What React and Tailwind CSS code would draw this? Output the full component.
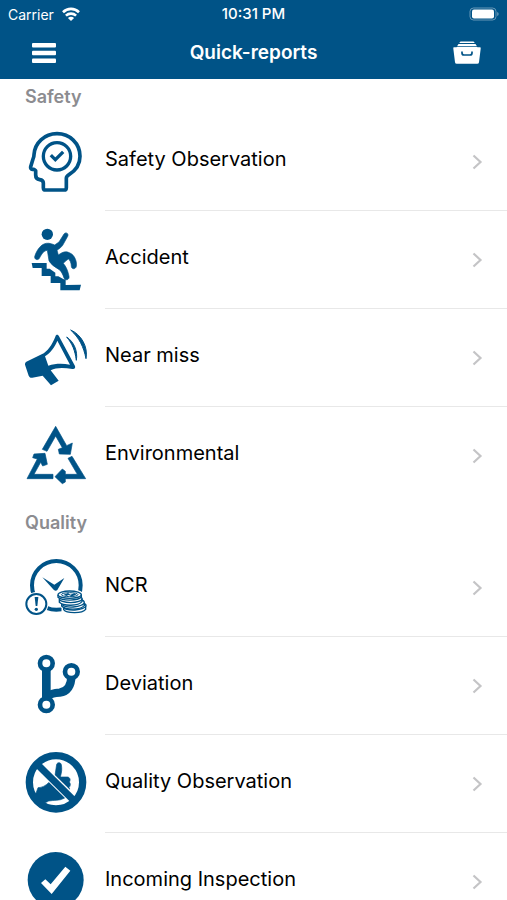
import { Fragment } from 'react';

const HeadCheckIcon = () => (
    <svg viewBox="27 30 192 192" className="w-16 h-16" fill="none" stroke="currentColor" strokeWidth="11" strokeLinecap="round" strokeLinejoin="round" aria-hidden="true">
        <path d="M92 210H147C151 210 154 207 154 203V175C154 170 157 167 162 164C182 152 195 132 195 109C195 70 164 41 126 41C88 41 59 69 57 104C57 109 56 113 54 117L47 140C46 145 48 148 52 148H57L62 152V165C62 173 67 178 74 179C81 180 85 183 85 189V203C85 207 88 210 92 210Z" />
        <circle cx="126" cy="109" r="41" strokeWidth="10" />
        <path d="M111 109L121 119L141 99" strokeWidth="10" strokeLinecap="square" strokeLinejoin="miter" />
    </svg>
);

const FallIcon = () => (
    <svg viewBox="27 24 192 192" className="w-16 h-16" fill="currentColor" aria-hidden="true">
        <circle cx="97" cy="43" r="17" />
        <path d="M87 72C95 68 106 69 119 75L132 66L147 42C152 35 162 40 158 49L143 76C140 81 131 87 126 91L130 105C140 98 149 93 160 97C168 100 174 104 178 111C184 121 185 130 184 139C182 149 169 148 169 139C169 129 165 120 160 117C154 121 149 125 145 130C152 139 158 149 162 169C164 180 151 183 147 174C143 162 139 154 133 149C120 141 107 133 102 122L97 91C86 92 80 102 73 115C69 122 58 119 59 110C63 96 73 78 87 72Z" stroke="currentColor" strokeWidth="2" />
        <path d="M50 129H95V146H104L121 158V169H130L146 178H152V195L198 194L194 211H136V189H107V168H80V144H53Z" />
    </svg>
);

const MegaphoneIcon = () => (
    <svg viewBox="27 18 192 192" className="w-16 h-16" fill="currentColor" aria-hidden="true">
        <path d="M34 125L80 103C98 94 111 75 121 50C123 42 130 43 132 49L180 138C182 145 178 148 172 147C147 143 124 142 107 151L131 182L108 196L83 167L52 173C46 174 43 171 41 167L31 137C29 131 30 128 34 125Z" />
        <path d="M127 62C119 82 106 99 90 109L100 137C121 130 144 130 165 134Z" fill="white" />
        <path d="M155 51C176 65 189 92 184 121C180 91 172 71 155 51Z" stroke="currentColor" strokeWidth="3" />
        <path d="M167 30C198 43 220 80 213 116C206 80 192 53 167 30Z" stroke="currentColor" strokeWidth="3" />
    </svg>
);

const RecycleIcon = () => (
    <svg viewBox="27 27 192 192" className="w-16 h-16" fill="currentColor" stroke="currentColor" strokeWidth="2" aria-hidden="true">
        <path d="M122 34L155 92L172 84L166 118L133 117L130 103L142 98L122 63L96 109L82 103Z" />
        <path d="M171 124L212 191H151V201L142 206L120 185L142 162L151 169V178H187L159 130Z" />
        <path d="M36 191L67 132L53 128L57 117L90 115L97 148L83 153L77 142L57 178H114V191Z" />
    </svg>
);

const ClockCoinsIcon = () => (
    <svg viewBox="27 18 192 192" className="w-16 h-16" fill="none" stroke="currentColor" aria-hidden="true">
        <circle cx="124" cy="106" r="73" strokeWidth="12" />
        <path d="M82 82L118 104L148 84L127 120Q122 125 116 119Z" fill="currentColor" stroke="none" />
        <circle cx="64" cy="162" r="34" fill="white" stroke="white" strokeWidth="4" />
        <circle cx="64" cy="162" r="30" strokeWidth="6" />
        <path d="M59 141H70L67 168H62Z" fill="currentColor" stroke="none" />
        <circle cx="64" cy="178" r="5" fill="currentColor" stroke="none" />
        <path d="M126 132C130 116 188 115 202 130V151L216 165V181C207 193 163 195 142 184V173L131 157Z" fill="white" stroke="white" strokeWidth="5" />
        <g strokeWidth="4">
            <path d="M146 171V179C154 190 201 192 212 178V167" fill="white" />
            <ellipse cx="179" cy="168" rx="34" ry="12" fill="white" transform="rotate(-3 179 168)" />
            <path d="M140 161V168C152 180 195 181 208 167V158" fill="white" />
            <ellipse cx="174" cy="159" rx="34" ry="12" fill="white" transform="rotate(-4 174 159)" />
            <path d="M133 148V157C145 169 190 169 201 155V145" fill="white" />
            <ellipse cx="167" cy="146" rx="34" ry="12" fill="white" />
            <path d="M129 135V142C142 153 188 153 199 141V134" fill="white" />
            <ellipse cx="164" cy="134" rx="35" ry="11" fill="white" />
            <ellipse cx="164" cy="134" rx="25" ry="6" strokeWidth="3" />
        </g>
        <path d="M146 134L159 129L166 134L178 130L184 134L171 139L161 135L154 138Z" fill="currentColor" stroke="none" />
    </svg>
);

const BranchIcon = () => (
    <svg viewBox="27 27 192 192" className="w-16 h-16" fill="none" stroke="currentColor" aria-hidden="true">
        <path d="M94 72V164" strokeWidth="26" />
        <path d="M169 93C169 122 157 140 134 143C115 144 107 146 98 154" strokeWidth="25" />
        <circle cx="94" cy="55" r="19" strokeWidth="14" fill="white" />
        <circle cx="169" cy="80" r="19" strokeWidth="14" fill="white" />
        <circle cx="94" cy="179" r="19" strokeWidth="14" fill="white" />
    </svg>
);

const NoThumbIcon = () => (
    <svg viewBox="27 30 192 192" className="w-16 h-16" fill="none" stroke="currentColor" aria-hidden="true">
        <path d="M125 67C127 60 138 61 139 68C141 80 141 88 136 105H158C166 107 167 115 163 120C168 126 166 133 162 136C166 142 163 148 158 151C160 159 155 166 147 169C133 177 116 174 101 177C91 184 75 185 67 178L59 165L69 137C81 137 92 131 101 122L120 100Z" fill="currentColor" strokeWidth="2" />
        <path d="M69 69L178 176" stroke="white" strokeWidth="28" />
        <path d="M65 65L181 180" strokeWidth="21" />
        <circle cx="123" cy="121" r="80" strokeWidth="22" />
    </svg>
);

const CheckCircleIcon = () => (
    <svg viewBox="27 30 192 192" className="w-16 h-16" fill="currentColor" aria-hidden="true">
        <circle cx="122" cy="120" r="84" />
        <path d="M78 129L91 118L107 133L151 80L166 92L110 162Z" fill="white" />
    </svg>
);

const sections = [
    {
        title: 'Safety',
        items: [
            { label: 'Safety Observation', icon: HeadCheckIcon },
            { label: 'Accident', icon: FallIcon },
            { label: 'Near miss', icon: MegaphoneIcon },
            { label: 'Environmental', icon: RecycleIcon },
        ],
    },
    {
        title: 'Quality',
        items: [
            { label: 'NCR', icon: ClockCoinsIcon },
            { label: 'Deviation', icon: BranchIcon },
            { label: 'Quality Observation', icon: NoThumbIcon },
            { label: 'Incoming Inspection', icon: CheckCircleIcon },
        ],
    },
];

const StatusBar = () => (
    <div className="grid grid-cols-3 items-center h-7 px-2 text-[14px]">
        <div className="flex items-center gap-2">
            <span>Carrier</span>
            <svg viewBox="0 0 18 14" className="w-[18px] h-3.5" fill="none" stroke="currentColor" strokeWidth="2.6" aria-hidden="true">
                <path d="M1 5.2C5.5 .8 12.5 .8 17 5.2" />
                <path d="M3.9 8.6C6.8 5.9 11.2 5.9 14.1 8.6" />
                <path d="M9 14L5.9 10.9C7.6 9.3 10.4 9.3 12.1 10.9Z" fill="currentColor" stroke="none" />
            </svg>
        </div>
        <span className="text-center text-[15px] font-medium">10:31 PM</span>
        <svg viewBox="0 0 30 14" className="w-[30px] h-3.5 justify-self-end" fill="none" aria-hidden="true">
            <rect x="1" y="1" width="26" height="12" rx="3.5" stroke="white" strokeOpacity=".4" />
            <rect x="3" y="2.6" width="22" height="8.8" rx="2" fill="white" />
            <path d="M28.3 5C30 5.7 30 8.3 28.3 9Z" fill="white" fillOpacity=".5" />
        </svg>
    </div>
);

const NavBar = () => (
    <div className="grid grid-cols-[48px_1fr_48px] items-center h-[51px] px-5">
        <button type="button" aria-label="Menu" className="w-12 h-10 pb-0.5 flex items-center justify-center">
            <svg viewBox="0 0 24 20" className="w-6 h-5" fill="currentColor" aria-hidden="true">
                <rect y="0" width="24" height="4.6" rx="1" />
                <rect y="7.7" width="24" height="4.6" rx="1" />
                <rect y="15.4" width="24" height="4.6" rx="1" />
            </svg>
        </button>
        <h1 className="text-center text-[19px] font-semibold">Quick-reports</h1>
        <button type="button" aria-label="Drafts" className="w-10 h-10 pb-0.5 flex items-center justify-center justify-self-end">
            <svg viewBox="0 0 28 24" className="w-7 h-6" fill="currentColor" aria-hidden="true">
                <path d="M7.5 .5H20.5L21.8 2H6.2Z" />
                <path d="M5.5 3H22.5L23.8 5H4.2Z" />
                <path d="M1 6.2H3.4L4.4 5.7H23.6L24.6 6.2H27Q27.9 6.2 27.7 7.6L26 21.3Q25.8 22.8 24.2 22.8H3.8Q2.2 22.8 2 21.3L.3 7.6Q.1 6.2 1 6.2Z" />
                <path d="M9 10.5V12Q9 14 11 14H17Q19 14 19 12V10.5" fill="none" stroke="#005387" strokeWidth="1.7" />
            </svg>
        </button>
    </div>
);

const ReportRow = ({ label, icon: Icon, last }) => (
    <a href="#" className="flex h-[98px] pl-6 gap-[17px]">
        <span className="flex items-center text-[#005387]">
            <Icon />
        </span>
        <span className={`flex flex-1 items-center justify-between pr-6 border-b ${last ? 'border-transparent' : 'border-[#e8e8e8]'}`}>
            <span className="pb-1.5 text-[20px] leading-6 text-black">{label}</span>
            <svg viewBox="0 0 12 16" className="w-3 h-4 text-[#c4c4c6]" fill="none" stroke="currentColor" strokeWidth="2.2" aria-hidden="true">
                <path d="M2.5 1.5L9.5 8L2.5 14.5" />
            </svg>
        </span>
    </a>
);

const App = () => {
    return (
        <div className="h-screen flex flex-col overflow-hidden bg-white font-['Inter',sans-serif]">
            <header className="shrink-0 bg-[#005387] text-white">
                <StatusBar />
                <NavBar />
            </header>

            <main className="flex-1 overflow-y-auto [scrollbar-width:none]">
                {sections.map((section) => (
                    <Fragment key={section.title}>
                        <h2 className="flex items-center h-[34px] px-[25px] text-[18px] font-semibold text-[#8c8c90]">
                            {section.title}
                        </h2>
                        <nav aria-label={section.title}>
                            {section.items.map((item, i) => (
                                <ReportRow key={item.label} {...item} last={i === section.items.length - 1} />
                            ))}
                        </nav>
                    </Fragment>
                ))}
            </main>
        </div>
    );
};

export default App;
